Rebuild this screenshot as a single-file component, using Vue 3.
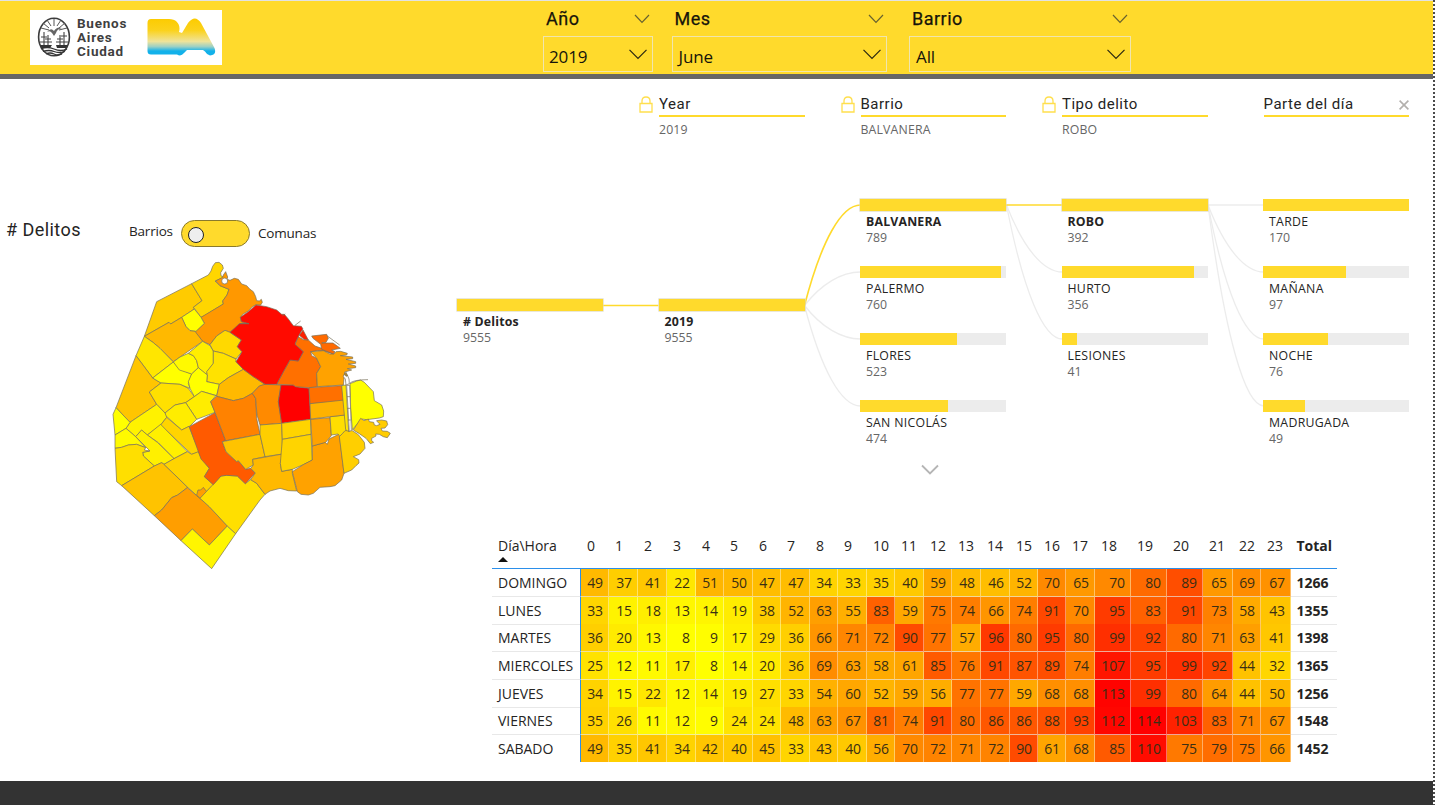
<script setup>
const slicers = [
  { title: 'Año', value: '2019', cls: 'year' },
  { title: 'Mes', value: 'June', cls: 'month' },
  { title: 'Barrio', value: 'All', cls: 'area' },
]

const levels = [
  { x: 659, title: 'Year', value: '2019', locked: true },
  { x: 860.5, title: 'Barrio', value: 'BALVANERA', locked: true },
  { x: 1062, title: 'Tipo delito', value: 'ROBO', locked: true },
  { x: 1263.5, title: 'Parte del día', value: '', locked: false },
]

const nodes = [
  { x: 457, y: 305, name: '# Delitos', n: 9555, w: 146, on: true },
  { x: 658.5, y: 305, name: '2019', n: 9555, w: 146, on: true },
  { x: 860, y: 205, name: 'BALVANERA', n: 789, w: 146, on: true },
  { x: 860, y: 272, name: 'PALERMO', n: 760, w: 140.6 },
  { x: 860, y: 339, name: 'FLORES', n: 523, w: 96.8 },
  { x: 860, y: 406, name: 'SAN NICOLÁS', n: 474, w: 87.7 },
  { x: 1061.5, y: 205, name: 'ROBO', n: 392, w: 146, on: true },
  { x: 1061.5, y: 272, name: 'HURTO', n: 356, w: 132.6 },
  { x: 1061.5, y: 339, name: 'LESIONES', n: 41, w: 15.3 },
  { x: 1263, y: 205, name: 'TARDE', n: 170, w: 146 },
  { x: 1263, y: 272, name: 'MAÑANA', n: 97, w: 83.3 },
  { x: 1263, y: 339, name: 'NOCHE', n: 76, w: 65.3 },
  { x: 1263, y: 406, name: 'MADRUGADA', n: 49, w: 42 },
]

const curve = (x, y1, y2) =>
  `M${x} ${y1}C${x + 17} ${y1 + (y2 - y1) * 0.65} ${x + 37} ${y2} ${x + 56} ${y2}`
const links = [
  ...[272, 339, 406].map((y) => curve(804.5, 305.5, y)),
  ...[272, 339].map((y) => curve(1006.5, 205, y)),
  ...[205, 272, 339, 406].map((y) => curve(1208, 205, y)),
]
const activeLinks = ['M603 305.5H658.5', curve(804.5, 305.5, 205), 'M1006 205H1062']

const edges = [581, 609, 638, 667, 696, 724, 753, 781, 810, 838, 867, 895, 924, 952, 981, 1010, 1038, 1066, 1095, 1131, 1167, 1203, 1233, 1261, 1291]
const columns = `89px ${edges.slice(1).map((e, i) => `${e - edges[i]}px`).join(' ')} 46px`
const hours = Array.from({ length: 24 }, (_, i) => i)
const rows = [
  { day: 'DOMINGO', total: 1266, v: [49, 37, 41, 22, 51, 50, 47, 47, 34, 33, 35, 40, 59, 48, 46, 52, 70, 65, 70, 80, 89, 65, 69, 67] },
  { day: 'LUNES', total: 1355, v: [33, 15, 18, 13, 14, 19, 38, 52, 63, 55, 83, 59, 75, 74, 66, 74, 91, 70, 95, 83, 91, 73, 58, 43] },
  { day: 'MARTES', total: 1398, v: [36, 20, 13, 8, 9, 17, 29, 36, 66, 71, 72, 90, 77, 57, 96, 80, 95, 80, 99, 92, 80, 71, 63, 41] },
  { day: 'MIERCOLES', total: 1365, v: [25, 12, 11, 17, 8, 14, 20, 36, 69, 63, 58, 61, 85, 76, 91, 87, 89, 74, 107, 95, 99, 92, 44, 32] },
  { day: 'JUEVES', total: 1256, v: [34, 15, 22, 12, 14, 19, 27, 33, 54, 60, 52, 59, 56, 77, 77, 59, 68, 68, 113, 99, 80, 64, 44, 50] },
  { day: 'VIERNES', total: 1548, v: [35, 26, 11, 12, 9, 24, 24, 48, 63, 67, 81, 74, 91, 80, 86, 86, 88, 93, 112, 114, 103, 83, 71, 67] },
  { day: 'SABADO', total: 1452, v: [49, 35, 41, 34, 42, 40, 45, 33, 43, 40, 56, 70, 72, 71, 72, 90, 61, 68, 85, 110, 75, 79, 75, 66] },
]
// yellow -> orange -> red scale over 8..114
const heat = (n) => {
  const g = n <= 61 ? 255 - (90 * (n - 8)) / 53 : (165 * (114 - n)) / 53
  return `rgb(255, ${Math.round(g)}, 0)`
}

const barrios = [
  ['#ffcb00', '170,140 275,86 306,137 280,157 283,162 245,187 212,207 207,202 133,244'],
  ['#ffd600', '275,86 325,60 333,48 338,34 346,23 357,22 367,30 370,40 362,53 363,62 371,67 345,78 360,92 387,103 381,120 368,138 370,147 312,183 303,187 285,163 280,157 306,137'],
  ['#ff9800', '303,187 370,147 368,138 381,120 387,103 360,92 347,78 368,67 370,60 377,50 383,66 381,73 390,76 403,70 415,73 425,87 440,92 450,103 460,110 467,125 470,137 478,138 484,133 487,142 482,150 468,149 455,157 445,168 428,178 421,188 424,200 447,206 420,206 410,216 390,232 375,226 350,243 330,269 308,259 285,230 313,205'],
  ['#ffff00', '245,187 283,162 303,187 313,205 288,229 270,227 258,215'],
  ['#ffb900', '133,244 207,202 212,207 245,187 258,215 270,227 285,229 308,259 220,320 180,280 160,263'],
  ['#ffe600', '133,244 160,263 180,280 220,321 158,369 108,302'],
  ['#ffc500', '108,302 158,369 183,384 148,411 170,448 90,502 48,458'],
  ['#ffff00', '158,369 220,321 238,342 275,357 265,385 270,400 240,388 183,384'],
  ['#fffa00', '220,321 240,306 265,295 282,303 290,317 295,338 275,357 238,345'],
  ['#ffee00', '265,295 308,259 330,272 340,288 340,325 322,350 320,360 295,338 290,317 280,302'],
  ['#ffd900', '330,269 350,243 375,226 390,232 424,255 412,275 426,290 408,312 370,295 340,288'],
  ['#ffe200', '340,288 370,295 408,312 408,320 430,343 385,368 358,388 320,380 322,360 320,350 340,325'],
  ['#ffff00', '295,338 322,360 320,380 358,388 350,422 305,409 283,425 270,400 265,380 275,357'],
  ['#ffe000', '183,384 240,388 265,400 283,425 257,443 225,450 195,474 170,448 148,411'],
  ['#ffb900', '358,388 385,368 430,343 460,365 495,388 478,393 457,415 430,430 400,437 350,424'],
  ['#ffed00', '283,425 305,409 348,422 332,440 345,472 290,493 257,443'],
  ['#ffed00', '257,443 290,493 270,513 245,525 197,482 195,474 225,450'],
  ['#fff200', '90,502 170,448 195,474 200,487 182,510 142,540 125,525 107,545 78,520'],
  ['#ffd400', '200,487 245,525 267,514 285,560 300,590 275,598 182,510'],
  ['#fff000', '142,540 182,508 262,590 222,611 175,563'],
  ['#fff000', '125,525 142,540 172,562 222,611 192,628 185,623 163,633 130,603 128,592 150,588 107,545'],
  ['#ffff00', '48,458 90,502 78,520 45,540 39,478'],
  ['#fffa00', '45,540 78,520 107,545 137,578 110,568 85,570 65,577 45,580'],
  ['#ffdf00', '45,580 65,577 85,570 110,568 137,578 133,585 148,588 128,592 130,603 163,633 65,692 50,680'],
  ['#ffc300', '65,692 163,633 185,623 192,628 263,697 233,720 215,728 185,765 163,782'],
  ['#ffd400', '192,628 222,611 262,590 275,598 295,590 305,610 328,640 313,665 340,689 298,730 290,722 263,697'],
  ['#ff9e00', '163,782 185,765 215,728 233,720 262,698 290,722 300,730 328,755 382,813 328,870 277,822 243,857'],
  ['#ff9e00', '290,720 294,705 302,705 310,697 320,710 310,722 300,730'],
  ['#fff500', '243,857 277,822 328,870 382,813 407,836 335,941'],
  ['#ffdf00', '300,730 363,663 380,661 412,663 436,686 452,674 470,685 495,718 480,735 407,836 382,813 328,755'],
  ['#ff5a00', '268,515 345,473 377,557 367,560 378,590 410,620 415,617 437,643 452,640 466,654 436,686 412,663 380,661 363,663 340,689 313,665 328,640 303,612'],
  ['#ff8200', '332,440 350,424 400,437 430,430 457,415 467,430 470,490 480,538 377,557 345,472'],
  ['#ff8a00', '457,415 478,393 495,388 543,390 535,440 545,505 480,510 471,480 467,430'],
  ['#ff0000', '543,390 580,390 587,395 627,400 632,493 600,497 545,505 535,440'],
  ['#ffc300', '367,560 480,538 495,605 458,613 460,630 437,643 415,617 410,620 378,590'],
  ['#ffce00', '480,510 545,505 548,597 495,605 480,538'],
  ['#ffd400', '545,505 632,493 633,538 547,553'],
  ['#ffb900', '458,613 548,597 541,625 545,649 577,643 577,655 590,708 565,707 540,700 510,708 495,718 470,685 452,674 466,654 452,640 460,630'],
  ['#ffd400', '547,553 633,538 637,615 610,629 577,643 545,649 541,625'],
  ['#ffa200', '577,650 610,629 637,615 637,573 675,562 682,568 687,552 718,537 732,655 725,675 705,692 690,695 660,697 640,715 625,720 603,718 592,710'],
  ['#ffa200', '632,493 690,488 694,542 677,562 637,573'],
  ['#ffde00', '690,485 735,480 740,527 728,535 720,545 714,537 694,540'],
  ['#ffcf00', '718,545 728,535 735,527 757,527 775,539 793,562 795,580 780,597 760,605 776,614 777,624 768,632 755,645 732,655'],
  ['#ff7000', '627,398 725,392 733,435 730,440 630,446'],
  ['#ffb200', '630,446 733,435 735,480 632,492'],
  ['#ffe600', '725,392 738,390 746,530 737,524'],
  ['#ff7000', '530,388 553,345 570,315 595,318 610,290 585,268 595,245 610,254 625,255 645,273 665,280 680,287 700,297 670,287 652,287 632,290 635,302 650,310 662,335 650,355 652,395 627,398 587,395 580,390'],
  ['#ffa200', '632,290 670,287 690,297 702,297 708,290 722,289 742,295 740,300 721,302 758,306 758,311 738,313 767,320 767,325 745,327 767,333 767,338 742,341 755,345 734,351 730,390 652,395 650,355 662,335 650,310'],
  ['#ff6a00', '635,243 680,238 685,250 678,262 665,264 699,264 721,280 695,285 705,290 700,297 665,283 662,268 639,250'],
  ['#ff0a00', '390,232 418,206 447,206 424,200 421,187 445,170 468,150 500,155 530,165 545,178 553,178 565,192 580,212 604,214 609,222 603,230 596,243 587,262 585,268 610,290 595,318 570,315 553,345 530,388 495,388 460,365 430,343 408,320 426,290 412,275 424,255'],
  ['#ff2000', '598,241 609,225 625,255 612,253'],
  ['#ffff00', '750,386 770,378 782,375 793,382 820,410 823,437 845,450 851,468 850,485 838,489 800,494 785,492 757,524 752,460'],
  ['#ffcc00', '782,490 792,497 805,492 808,500 821,502 823,510 830,512 840,508 832,500 830,497 845,495 860,498 863,509 855,519 843,520 847,528 862,529 871,535 862,548 850,545 838,538 827,537 828,543 815,550 815,557 821,562 811,566 798,550 778,536 760,525'],
]
</script>

<template>
  <div class="page">
    <header class="top">
      <div class="brand">
        <svg class="seal" viewBox="0 0 34 40" width="34" height="40">
          <ellipse cx="17" cy="20" rx="15.4" ry="18.8" fill="#fff" stroke="#3c3c3c" stroke-width="1.6" />
          <path d="M17 9V2M14 9 10 3M20 9 24 3M12 11 6 6M22 11 28 6M12 13 4 11M22 13 30 11" stroke="#555" stroke-width="1" />
          <path d="M10 15q4-5 7-1 3-5 8-3-5 1-6 5l-2 3-2-3q-2-3-5-1z" fill="#666" />
          <path d="M7 15v14M11 18v11M23 18v11M27 15v14M4 20h6M8 22h6M20 22h6M24 19h6M3 25h12M19 25h12" stroke="#444" stroke-width="1.1" />
          <path d="M3 28h12l-2 3H4zM19 28h12l-2 3h-9z" fill="#333" />
          <path d="M4 32q6-3 13 0t13 0M6 34.500q6-2 11 0t11 0M9 37q4-2 8 0t8 0" fill="none" stroke="#333" stroke-width="1.3" />
        </svg>
        <div class="brand-name"><span>Buenos</span><span>Aires</span><span>Ciudad</span></div>
        <svg class="ba" viewBox="0 0 69 38" width="69" height="38">
          <defs>
            <linearGradient id="baFill" x1="0" y1="0" x2="0" y2="1">
              <stop offset="0" stop-color="#fccb00" />
              <stop offset=".32" stop-color="#fbd21c" />
              <stop offset=".62" stop-color="#efe39a" />
              <stop offset=".76" stop-color="#9cd0c4" />
              <stop offset=".88" stop-color="#12b1ea" />
              <stop offset="1" stop-color="#12b1ea" />
            </linearGradient>
          </defs>
          <path fill="url(#baFill)" d="M4 1H22C30 1 34 7 32 14L35 15 41 5Q48-4 54 5L67.500 30Q70 37 63 37.500 60 37 58 33.500L56 32H40L37 35Q34 39 30 36.500H4Q.5 36.500.5 33V5Q.5 1 4 1Z" />
        </svg>
      </div>
      <div class="slicers">
        <section v-for="s in slicers" :key="s.title" class="slicer" :class="s.cls">
          <div class="slicer-head">
            <span>{{ s.title }}</span>
            <svg width="16" height="10" viewBox="0 0 16 10"><path d="M1 1 8 8.300 15 1" fill="none" stroke="#68622f" stroke-width="1.2" /></svg>
          </div>
          <div class="slicer-box">
            <span>{{ s.value }}</span>
            <svg width="18" height="11" viewBox="0 0 18 11"><path d="M.5.8 9 9.500 17.500.8" fill="none" stroke="#2b2710" stroke-width="1.2" /></svg>
          </div>
        </section>
      </div>
    </header>

    <main class="body">
      <section class="map-panel">
        <div class="map-head">
          <h2>#&nbsp;Delitos</h2>
          <span class="opt left">Barrios</span>
          <span class="toggle"><i></i></span>
          <span class="opt right">Comunas</span>
        </div>
        <svg class="map" viewBox="0 0 900 960" width="300" height="320">
          <g stroke="#77705a" stroke-opacity=".8" stroke-width="2.6" stroke-linejoin="round">
            <polygon v-for="(b, i) in barrios" :key="i" :fill="b[0]" :points="b[1]" />
            <circle cx="374" cy="78" r="9" fill="#fff" />
            <path d="M740 391 749 391 754 525 748 531Z" fill="#fff" />
            <path d="M741 425H750M742 460H751M744 495H752" />
            <path d="M738 390 736 372 730 365 733 357 742 360 747 372 748 386Z" fill="#fff" />
            <path d="M733 357 738 352 743 362 738 364Z" fill="#b58a28" />
            <path d="M749 385Q760 374 804 374M585 211 602 198M682 243 719 270M547 183 556 177M420 206H447" fill="none" />
          </g>
        </svg>
      </section>

      <section class="tree">
        <svg class="links" width="1433" height="420" viewBox="0 79 1433 420">
          <path v-for="d in links" :key="d" :d="d" fill="none" stroke="#ececec" stroke-width="1.3" />
          <path v-for="d in activeLinks" :key="d" :d="d" fill="none" stroke="#ffda2c" stroke-width="1.6" />
          <path d="M922 465.500 930 473.500 938 465.500" fill="none" stroke="#b5b5b5" stroke-width="1.8" />
        </svg>
        <div v-for="l in levels" :key="l.title" class="level" :style="{ left: l.x + 'px' }">
          <svg v-if="l.locked" class="lock" width="14" height="17" viewBox="0 0 14 17"><path d="M1 7.500H13V16H1ZM3 7.500V5Q3 1 7 1T11 5V7.500" fill="none" stroke="#ffdf4d" stroke-width="1.3" /></svg>
          <div class="level-title">
            <span>{{ l.title }}</span>
            <svg v-if="!l.locked" width="10" height="10" viewBox="0 0 10 10"><path d="M.6.6 9.400 9.400M9.400.6.6 9.400" stroke="#b3b0ad" stroke-width="1.6" /></svg>
          </div>
          <div class="level-value">{{ l.value }}</div>
        </div>
        <div v-for="n in nodes" :key="n.name" class="node" :class="{ on: n.on }" :style="{ left: n.x + 'px', top: n.y - 85 + 'px' }">
          <div class="track"><div class="fill" :style="{ width: n.w + 'px' }"></div></div>
          <div class="name">{{ n.name }}</div>
          <div class="count">{{ n.n }}</div>
        </div>
      </section>

      <section class="matrix">
        <div class="row head" :style="{ gridTemplateColumns: columns }">
          <div class="corner"><span>Día\Hora</span><svg width="10" height="5" viewBox="0 0 10 5"><path d="M0 5 5 0 10 5Z" fill="#111" /></svg></div>
          <div v-for="h in hours" :key="h" class="hour">{{ h }}</div>
          <div class="total">Total</div>
        </div>
        <div v-for="r in rows" :key="r.day" class="row" :style="{ gridTemplateColumns: columns }">
          <div class="day">{{ r.day }}</div>
          <div v-for="(n, i) in r.v" :key="i" class="cell" :style="{ backgroundColor: heat(n) }">{{ n }}</div>
          <div class="total">{{ r.total }}</div>
        </div>
      </section>
    </main>
    <footer class="bottom"></footer>
  </div>
</template>

<style>
body { margin: 0; background: #fff; overflow: hidden; }
</style>

<style scoped>
.page {
  position: relative;
  display: flex;
  flex-direction: column;
  width: 1435px;
  height: 805px;
  overflow: hidden;
  box-sizing: border-box;
  background: repeating-linear-gradient(#4a4a4a 0 2px, #fff 2px 4px) 1433px 0 / 2px 100% no-repeat #fff;
  font-family: "Open Sans", "Noto Sans", sans-serif;
  color: #252423;
}
.top {
  display: flex;
  width: 1433px;
  height: 79px;
  box-sizing: border-box;
  border-top: 1px solid #e2e2e2;
  border-bottom: 5px solid #666;
  background: #ffda2c;
}
.brand {
  display: flex;
  width: 192px;
  height: 55px;
  margin: 9px 0 0 30px;
  background: #fff;
}
.seal { margin: 7px 0 0 7px; }
.brand-name {
  display: flex;
  flex-direction: column;
  width: 53px;
  margin: 7px 0 0 6px;
  font: 700 13.500px/13.800px Roboto, sans-serif;
  letter-spacing: .75px;
  color: #3f3f3f;
}
.ba { margin: 8px 0 0 17px; }
.slicers { display: flex; margin-left: 321px; }
.slicer { display: flex; flex-direction: column; }
.year { width: 110px; margin-right: 18.500px; }
.month { width: 215.500px; margin-right: 22px; }
.area { width: 222px; }
.slicer-head {
  display: flex;
  justify-content: space-between;
  align-items: center;
  height: 35px;
  padding: 0 3px;
  font: 400 18px/35px Roboto, sans-serif;
  letter-spacing: .5px;
  -webkit-text-stroke: .25px #16140a;
  color: #16140a;
}
.slicer-box {
  display: flex;
  justify-content: space-between;
  box-sizing: border-box;
  height: 36px;
  padding: 0 5px;
  border: 1px solid #f0e5ae;
  font-size: 17px;
  line-height: 39px;
  color: #16140a;
}
.slicer-box span { letter-spacing: -.1px; }
.month .slicer-box span, .area .slicer-box span { margin-left: 1px; }
.slicer-box svg { margin-top: 12px; }
.body { position: relative; display: flex; flex-direction: column; width: 1433px; height: 702px; }
.map-panel { display: flex; flex-direction: column; width: 440px; height: 457px; }
.map-head { display: flex; align-items: center; height: 27px; margin: 141px 0 8px 7px; }
.map-head h2 { width: 122px; margin: -8px 0 0 -1px; padding-right: 1px; font: 400 18px/24px Roboto, sans-serif; letter-spacing: .45px; }
.opt { font-size: 13.500px; letter-spacing: -.2px; white-space: nowrap; }
.opt.left { width: 52px; margin-top: -5px; }
.opt.right { margin: -2px 0 0 8px; }
.toggle {
  box-sizing: border-box;
  width: 69px;
  height: 27px;
  padding: 6px 0 0 6px;
  border: 1px solid #8a7a2c;
  border-radius: 14px;
  background: #ffda2c;
}
.toggle i { display: block; box-sizing: border-box; width: 16px; height: 16px; border: 1.500px solid #222; border-radius: 50%; background: #eee; }
.map { flex: none; margin-left: 100px; }
.tree { position: absolute; left: 0; top: 0; width: 1433px; height: 420px; }
.links { position: absolute; left: 0; top: 0; }
.level { position: absolute; top: 15px; width: 145.500px; }
.lock { position: absolute; left: -20px; top: 2px; }
.level-title {
  display: flex;
  justify-content: space-between;
  align-items: center;
  height: 21px;
  border-bottom: 2px solid #ffda2c;
  font: 400 15px/19px Roboto, sans-serif;
  letter-spacing: .5px;
}
.level-title svg { margin-top: 1px; }
.level-value { margin-top: 4px; font-size: 12.300px; line-height: 17px; letter-spacing: .15px; color: #666; }
.node { position: absolute; width: 146px; }
.track { height: 12px; margin-top: -.500px; background: #ececec; }
.fill { height: 100%; background: #ffda2c; }
.on .track { box-shadow: 0 0 0 .6px #dcd7bd; }
.name { margin: 3px 0 0 6px; font-size: 12.300px; line-height: 16px; letter-spacing: .3px; white-space: nowrap; }
.on .name { font-weight: 700; letter-spacing: .2px; }
.count { margin-left: 6px; font-size: 12.300px; line-height: 16px; color: #666; }
.matrix { display: flex; flex-direction: column; width: 845px; margin-left: 492px; font-size: 14px; }
.row { display: grid; height: 27.700px; box-sizing: border-box; line-height: 27px; }
.row > div { box-sizing: border-box; border-bottom: 1px solid #e8e8e8; }
.row.head { height: 33px; line-height: 20px; border-bottom: 1.500px solid #2b8fea; }
.row.head > div { border-bottom: 0; }
.corner { display: flex; flex-direction: column; padding-left: 6px; }
.corner svg { margin-top: 1px; }
.hour { padding-left: 6px; }
.day { padding-left: 6px; border-right: 1.500px solid #2b8fea; letter-spacing: -.02px; }
.cell { padding-right: 5px; text-align: right; letter-spacing: -.1px; color: #3a2f14; }
.row > .cell { border-right: 1px solid rgba(255, 255, 255, .4); border-bottom: 1px solid rgba(235, 235, 235, .65); }
.total { padding-left: 5.500px; font-weight: 700; }
.row:last-child { height: 26px; }
.row:last-child > div { border-bottom: 0; }
.bottom { width: 1433px; height: 24px; background: #333; }
</style>
